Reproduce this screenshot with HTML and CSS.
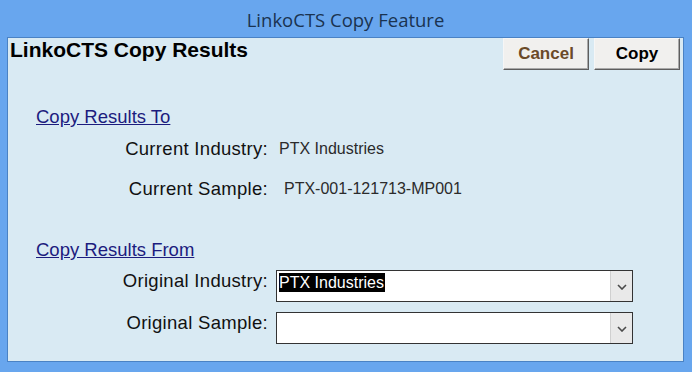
FILE: index.html
```html
<!DOCTYPE html>
<html>
<head>
<meta charset="utf-8">
<link rel="stylesheet" href="styles.css">
</head>
<body>
<div class="window">
  <div class="titlebar">LinkoCTS Copy Feature</div>
  <div class="content">
    <div class="header">
      <h1 class="heading">LinkoCTS Copy Results</h1>
      <div class="buttons">
        <button class="btn btn-cancel">Cancel</button>
        <button class="btn btn-copy">Copy</button>
      </div>
    </div>

    <a class="section-link link-to" href="#">Copy Results To</a>
    <div class="fields fields-to">
      <div class="label">Current Industry:</div>
      <div class="value">PTX Industries</div>
      <div class="label row-gap">Current Sample:</div>
      <div class="value value-sample row-gap">PTX-001-121713-MP001</div>
    </div>

    <a class="section-link link-from" href="#">Copy Results From</a>
    <div class="fields fields-from">
      <div class="label">Original Industry:</div>
      <div class="select">
        <div class="select-text"><span class="selected">PTX Industries</span></div>
        <div class="select-arrow">
          <svg width="10" height="6" viewBox="0 0 10 6"><path d="M1 1 L5 5 L9 1" fill="none" stroke="#4a4a4a" stroke-width="1.6"/></svg>
        </div>
      </div>
      <div class="label">Original Sample:</div>
      <div class="select">
        <div class="select-text"></div>
        <div class="select-arrow">
          <svg width="10" height="6" viewBox="0 0 10 6"><path d="M1 1 L5 5 L9 1" fill="none" stroke="#4a4a4a" stroke-width="1.6"/></svg>
        </div>
      </div>
    </div>
  </div>
</div>
</body>
</html>
```

FILE: styles.css
```css
* { box-sizing: border-box; }
html, body { margin: 0; padding: 0; }
body {
  width: 692px;
  height: 372px;
  overflow: hidden;
  font-family: "Liberation Sans", Arial, sans-serif;
}
.window {
  width: 692px;
  height: 372px;
  background: #68a6ee;
  padding: 0 8px 10px 7px;
  display: flex;
  flex-direction: column;
}
.titlebar {
  height: 37px;
  display: flex;
  align-items: center;
  justify-content: center;
  font-family: "Open Sans", "Noto Sans", sans-serif;
  font-size: 18.5px;
  color: #1a3350;
  padding-top: 2px;
}
.content {
  flex: 1;
  background: #d9eaf3;
  border: 1px solid #4a82c4;
  display: flex;
  flex-direction: column;
}
.header {
  display: flex;
  justify-content: space-between;
  align-items: flex-start;
  height: 32px;
  padding-right: 3px;
}
.heading {
  margin: 0 0 0 2px;
  font-size: 21px;
  line-height: 24px;
  font-weight: bold;
  color: #000;
}
.buttons {
  display: flex;
  gap: 5px;
}
.btn {
  height: 32px;
  font-family: "Liberation Sans", Arial, sans-serif;
  font-size: 17px;
  font-weight: bold;
  background: #f1f0ee;
  border: 1px solid;
  border-color: #f6f6f6 #5e5e5e #5e5e5e #f6f6f6;
  box-shadow: inset -1px -1px 0 #a9a9a9;
  padding: 0;
}
.btn-cancel { width: 86px; color: #6b4a28; }
.btn-copy { width: 86px; color: #000; }

.section-link {
  display: block;
  align-self: flex-start;
  margin-left: 28px;
  font-size: 18.5px;
  line-height: 18px;
  color: #1c1c7e;
  text-decoration: underline;
}
.link-to { margin-top: 38px; }
.link-from { margin-top: 43px; }

.fields {
  display: grid;
  grid-template-columns: 260px 1fr;
  column-gap: 8px;
  align-items: start;
}
.fields-to { margin-top: 14px; }
.fields-from { margin-top: 11px; row-gap: 10px; }
.fields-from .label { margin-top: 2px; }

.label {
  text-align: right;
  font-size: 18.5px;
  letter-spacing: 0.3px;
  line-height: 18px;
  color: #111;
}
.value {
  font-size: 16px;
  line-height: 18px;
  color: #2b2b2b;
  padding-left: 3px;
}
.value-sample { padding-left: 8px; }
.row-gap { margin-top: 22px; }

.select {
  width: 357px;
  height: 32px;
  background: #fff;
  border: 1px solid #333;
  display: flex;
}
.select-text {
  flex: 1;
  padding: 2px 0 0 2px;
}
.selected {
  display: inline-block;
  background: #000;
  color: #fff;
  font-size: 16px;
  line-height: 19px;
  padding-right: 1px;
}
.select-arrow {
  width: 22px;
  background: #e9e9e9;
  border-left: 1px solid #d0d0d0;
  display: flex;
  align-items: center;
  justify-content: center;
  padding-top: 2px;
}
.select-arrow svg { display: block; }
```
